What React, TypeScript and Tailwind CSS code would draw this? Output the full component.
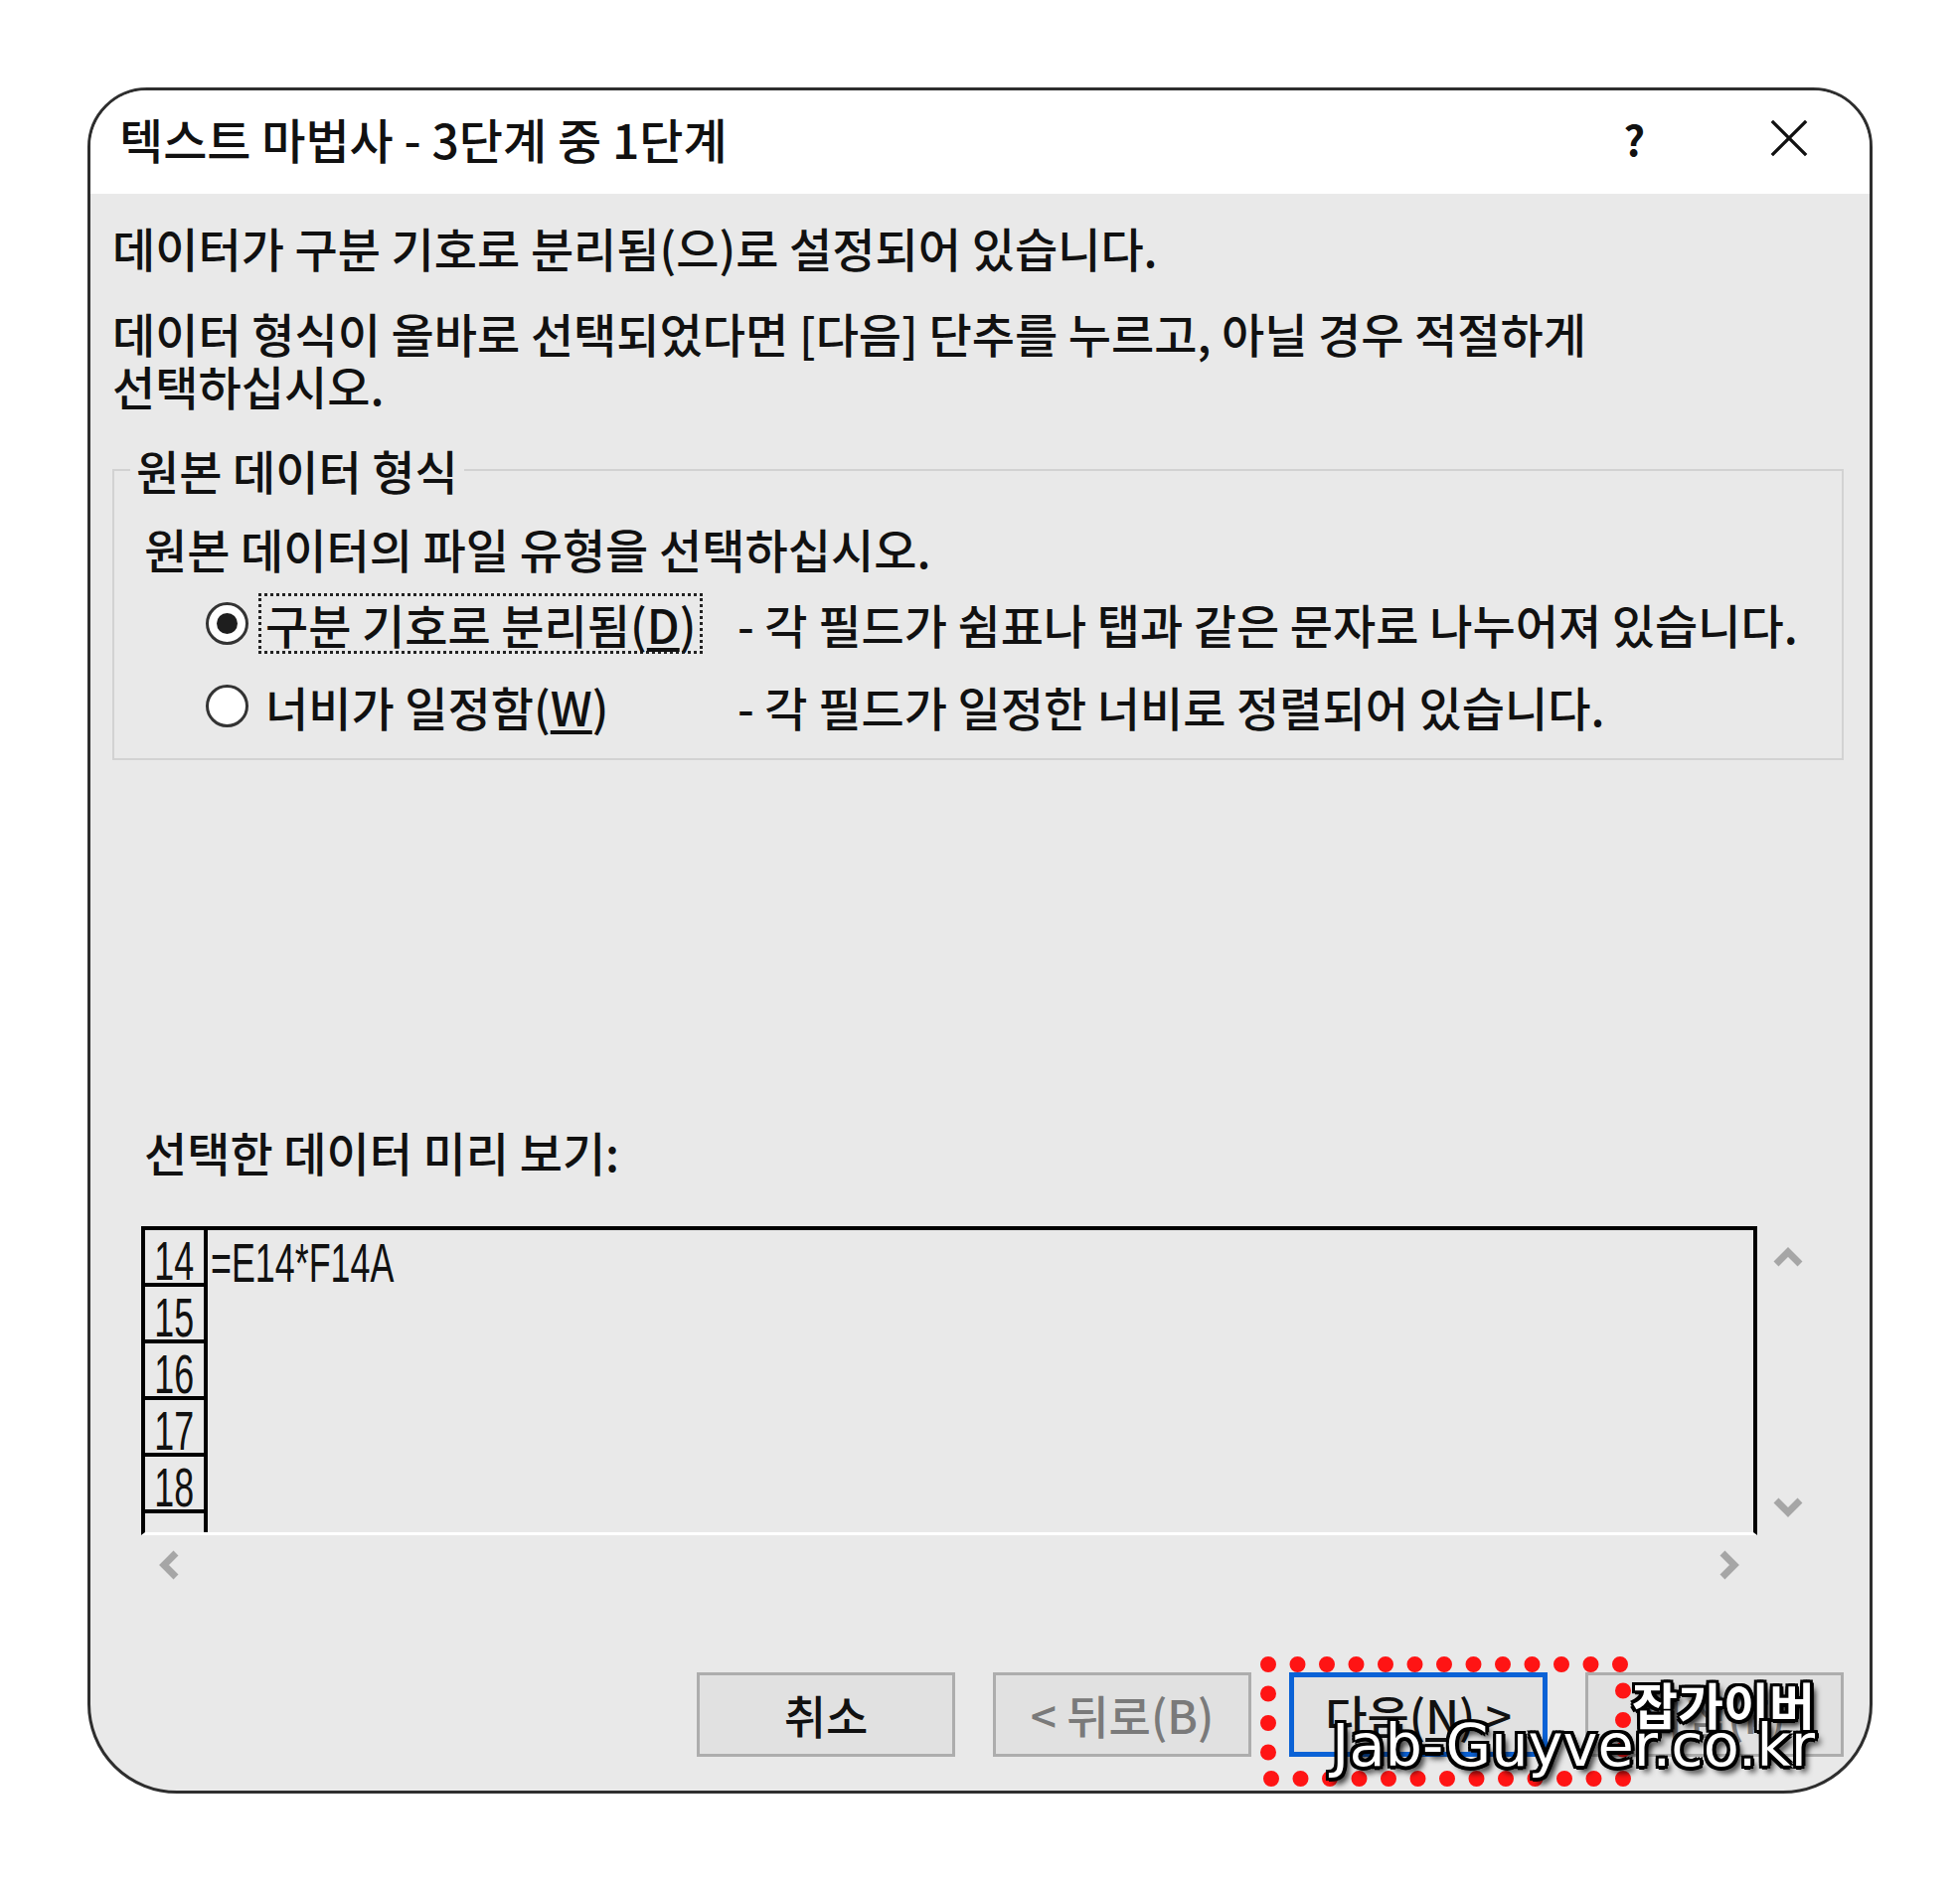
import React from "react";

const font = "font-['Noto_Sans_CJK_KR','Noto_Sans',sans-serif]";

const Radio = ({ checked }: { checked?: boolean }) => (
    <div className="w-[43px] h-[43px] rounded-full border-[3px] border-[#333] bg-white flex items-center justify-center shrink-0">
        {checked && <div className="w-[21px] h-[21px] rounded-full bg-[#1e1e1e]" />}
    </div>
);

const Chevron = ({ dir }: { dir: "up" | "down" | "left" | "right" }) => {
    const paths = {
        up: "M5 21 L17 9 L29 21",
        down: "M5 9 L17 21 L29 9",
        left: "M21 5 L9 17 L21 29",
        right: "M9 5 L21 17 L9 29",
    };
    const vertical = dir === "up" || dir === "down";
    return (
        <svg viewBox={vertical ? "0 0 34 30" : "0 0 30 34"} className={vertical ? "w-[34px] h-[30px]" : "w-[30px] h-[34px]"}>
            <path d={paths[dir]} fill="none" stroke="#a6a6a6" strokeWidth="7" strokeLinejoin="miter" />
        </svg>
    );
};

const Button = ({ children, primary, disabled }: { children: React.ReactNode; primary?: boolean; disabled?: boolean }) => (
    <div
        className={`w-[260px] h-[85px] flex items-center justify-center bg-[#e1e1e1] text-[46px] ${
            primary ? "border-[5px] border-[#0b62d6]" : "border-[3px] border-[#adadad]"
        } ${disabled ? "text-[#7a7a7a]" : "text-[#111]"}`}
    >
        {children}
    </div>
);

export default function App() {
    return (
        <div className={`w-[1972px] h-[1893px] bg-white pt-[88px] pl-[88px] ${font}`}>
            <div className="relative w-[1796px] h-[1717px] border-[3px] border-[#2e2e2e] rounded-t-[60px] rounded-b-[90px] overflow-hidden bg-[#e9e9e9] flex flex-col">

                {/* title bar */}
                <div className="h-[104px] bg-white flex items-center pl-[29px] pr-[60px] pb-[8px] shrink-0">
                    <div className="text-[48px] font-medium text-[#111] leading-none">텍스트 마법사 - 3단계 중 1단계</div>
                    <div className="ml-auto flex items-center gap-[124px]">
                        <span className="text-[42px] font-bold text-[#111] leading-none">?</span>
                        <svg viewBox="0 0 44 44" className="w-[42px] h-[42px]">
                            <path d="M4 4 L40 40 M40 4 L4 40" stroke="#111" strokeWidth="3.5" />
                        </svg>
                    </div>
                </div>

                {/* body */}
                <div className="flex-1 pl-[22px] pr-[26px] pt-[27px] text-[47px] font-medium leading-[53px] text-[#111]">
                    <p>데이터가 구분 기호로 분리됨(으)로 설정되어 있습니다.</p>
                    <p className="mt-[33px]">
                        데이터 형식이 올바로 선택되었다면 [다음] 단추를 누르고, 아닐 경우 적절하게
                        <br />
                        선택하십시오.
                    </p>

                    {/* group box */}
                    <fieldset className="mt-[32px] border-2 border-[#d2d2d2] pb-[22px]">
                        <legend className="ml-[16px] px-[6px]">원본 데이터 형식</legend>
                        <p className="mt-[26px] ml-[30px]">원본 데이터의 파일 유형을 선택하십시오.</p>

                        <div className="mt-[18px] h-[62px] flex items-center">
                            <div className="ml-[92px] w-[535px] flex items-center gap-[10px] shrink-0">
                                <Radio checked />
                                <span className="h-[61px] flex items-center px-[4px] border-[3px] border-dotted border-[#222] whitespace-nowrap">
                                    구분 기호로 분리됨(<span className="underline underline-offset-4">D</span>)
                                </span>
                            </div>
                            <span className="whitespace-nowrap">- 각 필드가 쉼표나 탭과 같은 문자로 나누어져 있습니다.</span>
                        </div>

                        <div className="mt-[21px] h-[62px] flex items-center">
                            <div className="ml-[92px] w-[535px] flex items-center gap-[10px] shrink-0">
                                <Radio />
                                <span className="h-[61px] flex items-center px-[4px] border-[3px] border-transparent whitespace-nowrap">
                                    너비가 일정함(<span className="underline underline-offset-4">W</span>)
                                </span>
                            </div>
                            <span className="whitespace-nowrap">- 각 필드가 일정한 너비로 정렬되어 있습니다.</span>
                        </div>
                    </fieldset>

                    {/* preview */}
                    <p className="mt-[367px] ml-[32px]">선택한 데이터 미리 보기:</p>

                    <div className="mt-[49px] ml-[29px] flex">
                        <div className="w-[1626px] h-[311px] border-t-4 border-l-4 border-r-4 border-black border-b-[3px] border-b-white flex overflow-hidden font-['Liberation_Sans',sans-serif] font-normal">
                            <div className="w-[63px] border-r-4 border-black flex flex-col shrink-0">
                                {["14", "15", "16", "17", "18", ""].map((n, i) => (
                                    <div key={i} className="h-[57px] shrink-0 border-b-4 border-black flex items-center justify-center">
                                        <span className="inline-block text-[56px] leading-[50px] scale-x-[0.64] origin-center pt-[8px]">{n}</span>
                                    </div>
                                ))}
                            </div>
                            <div className="pl-[3px] h-[57px] flex items-center">
                                <span className="inline-block text-[56px] leading-[50px] scale-x-[0.64] origin-left pt-[8px] whitespace-nowrap">=E14*F14A</span>
                            </div>
                        </div>
                        <div className="w-[62px] h-[311px] flex flex-col items-center justify-between pt-[17px] pb-[14px]">
                            <Chevron dir="up" />
                            <Chevron dir="down" />
                        </div>
                    </div>

                    <div className="mt-[10px] ml-[29px] w-[1626px] h-[40px] flex items-center justify-between px-[14px]">
                        <Chevron dir="left" />
                        <Chevron dir="right" />
                    </div>

                    {/* buttons */}
                    <div className="mt-[88px] flex justify-end gap-[38px]">
                        <Button>취소</Button>
                        <Button disabled>&lt; 뒤로(B)</Button>
                        <Button primary>
                            다음(<span className="underline underline-offset-4">N</span>) &gt;
                        </Button>
                        <Button disabled>마침(F)</Button>
                    </div>
                </div>

                {/* red highlight */}
                <svg className="absolute left-[1177px] top-[1576px] w-[373px] h-[131px]" viewBox="0 0 373 131">
                    <rect x="8" y="8" width="357" height="115" fill="none" stroke="#ff1414" strokeWidth="16" strokeLinecap="round" strokeDasharray="0 29.5" />
                </svg>

                {/* watermark */}
                <div className="absolute right-[55px] top-[1598px] flex flex-col items-end leading-none text-white [text-shadow:3px_3px_0_#000,-3px_3px_0_#000,3px_-3px_0_#000,-3px_-3px_0_#000,0_4px_0_#000,4px_0_0_#000,0_-3px_0_#000,-3px_0_0_#000,5px_6px_6px_#000]">
                    <span className="text-[50px] font-bold font-['Noto_Sans_CJK_KR',sans-serif]">잡가이버</span>
                    <span className="text-[59px] -mt-[12px] font-['DejaVu_Sans',sans-serif] font-normal">Jab-Guyver.co.kr</span>
                </div>
            </div>
        </div>
    );
}
